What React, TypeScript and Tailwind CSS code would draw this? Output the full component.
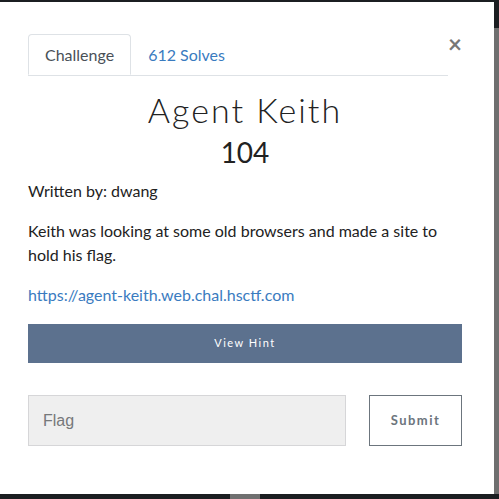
export default function App() {
  return (
    <div className="flex h-[499px] w-[499px] flex-col overflow-hidden bg-[#1b1e21] font-['Lato','Noto_Sans',sans-serif]">
      <div className="h-[2px] shrink-0" />
      <div className="flex h-[492px] shrink-0">
        {/* modal */}
        <div className="relative w-[494px] shrink-0 bg-white pl-[28px] pr-[32px] pt-[32px]">
          <button className="absolute right-[32px] top-[30px] text-[24px] font-bold leading-none text-[#777]">
            ×
          </button>
          {/* tabs */}
          <div className="mr-[14px] flex border-b border-[#dee2e6]">
            <div className="-mb-px flex h-[41px] items-center rounded-t border border-[#dee2e6] border-b-white bg-white px-[16px] text-[16px] text-[#495057]">
              Challenge
            </div>
            <div className="flex h-[41px] items-center px-[17px] text-[16px] text-[#3a7bbf]">612 Solves</div>
          </div>

          <h2 className="mt-[14px] text-center text-[34px] font-light leading-[40px] tracking-[2px] text-[#222]">
            Agent Keith
          </h2>
          <h3 className="mt-[5px] text-center text-[28px] leading-[34px] text-[#222]">104</h3>

          <p className="mt-[10px] text-[16px] leading-[24px] text-[#222]">Written by: dwang</p>
          <p className="mt-[16px] text-[16px] leading-[24px] text-[#222]">
            Keith was looking at some old browsers and made a site to hold his flag.
          </p>
          <p className="mt-[16px] text-[16px] leading-[24px]">
            <a className="text-[#3a7bbf]">https://agent-keith.web.chal.hsctf.com</a>
          </p>

          <button className="mt-[17px] flex h-[39px] w-full items-center justify-center bg-[#5c718e] text-[11px] tracking-[1.5px] text-white">
            View Hint
          </button>

          <div className="mt-[32px] flex justify-between">
            <input
              placeholder="Flag"
              className="h-[51px] w-[318px] border border-[#d6d6d8] bg-[#efefef] px-[14px] font-['Liberation_Sans',sans-serif] text-[16px] placeholder:text-[#76787a] outline-none"
            />
            <button className="h-[51px] w-[93px] border border-[#6c757d] bg-white text-[13px] font-bold tracking-[1.5px] text-[#6c757d]">
              Submit
            </button>
          </div>
        </div>
        {/* scrollbar */}
        <div className="flex w-[5px] flex-col">
          <div className="h-[26px]" />
          <div className="flex-1 bg-[#6f6f6f]" />
        </div>
      </div>
      <div className="flex h-[5px] shrink-0">
        <div className="w-[230px]" />
        <div className="w-[30px] bg-[#707070]" />
      </div>
    </div>
  );
}
